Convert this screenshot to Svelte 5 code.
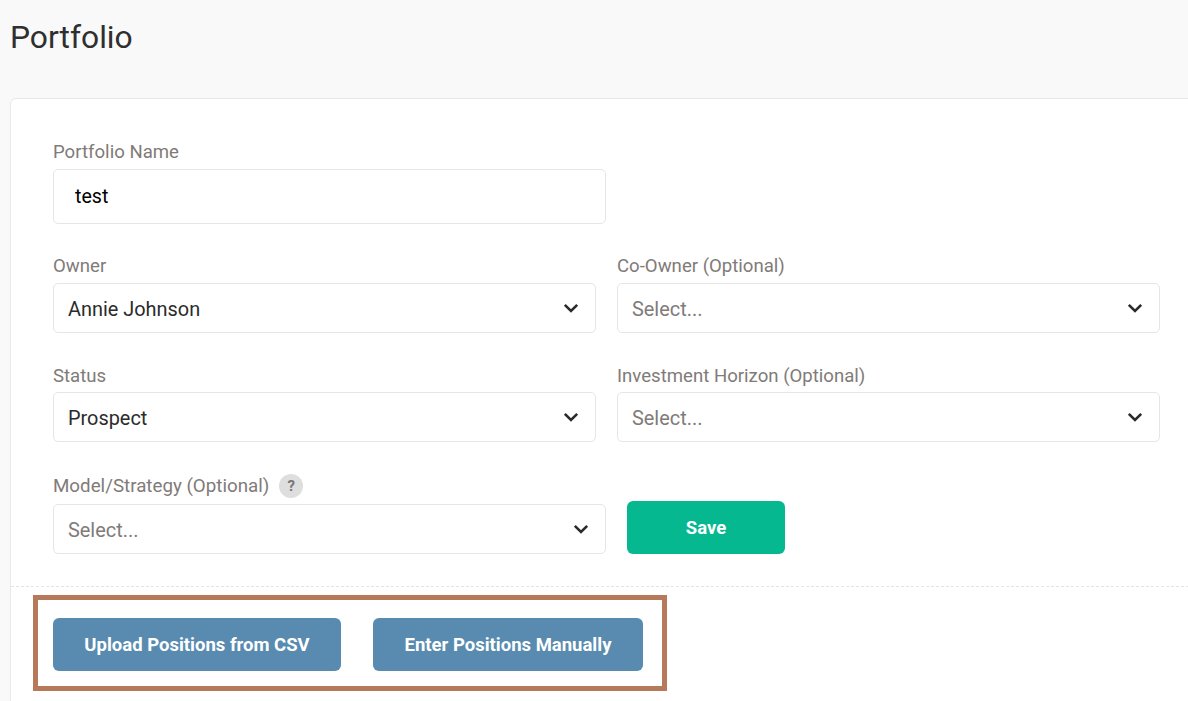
<script lang="ts">
	const rows = [
		[
			{ label: 'Owner', value: 'Annie Johnson' },
			{ label: 'Co-Owner (Optional)', value: '' }
		],
		[
			{ label: 'Status', value: 'Prospect' },
			{ label: 'Investment Horizon (Optional)', value: '' }
		]
	];
</script>

{#snippet select(value: string)}
	<div class="select">
		<span class:placeholder={!value}>{value || 'Select...'}</span>
		<svg class="chevron" width="16" height="10" viewBox="0 0 16 10" aria-hidden="true">
			<path d="M1.8 1.8 8 8l6.2-6.2" fill="none" stroke="#2b2b2b" stroke-width="2.6" />
		</svg>
	</div>
{/snippet}

<main class="page">
	<h1>Portfolio</h1>
	<section class="card">
		<div class="form">
			<label class="name-label" for="portfolio-name">Portfolio Name</label>
			<input id="portfolio-name" class="name-input" value="test" />

			{#each rows as row, i (i)}
				<div class="row" class:second={i === 1}>
					{#each row as field (field.label)}
						<div class="field">
							<div class="label">{field.label}</div>
							{@render select(field.value)}
						</div>
					{/each}
				</div>
			{/each}

			<div class="label model-label">
				Model/Strategy (Optional)
				<span class="help">?</span>
			</div>
			<div class="model-row">
				{@render select('')}
				<button class="save">Save</button>
			</div>
		</div>

		<div class="actions">
			<div class="highlight">
				<button class="blue upload">Upload Positions from CSV</button>
				<button class="blue manual">Enter Positions Manually</button>
			</div>
		</div>
	</section>
</main>

<style>
	:global(body) {
		margin: 0;
		background: #f9f9f9;
		font-family: Roboto, 'Liberation Sans', sans-serif;
		overflow: hidden;
	}
	.page {
		height: 701px;
		padding-left: 10px;
		overflow: hidden;
		box-sizing: border-box;
	}
	h1 {
		margin: 0;
		height: 98px;
		padding-top: 17px;
		box-sizing: border-box;
		font-size: 31.8px;
		line-height: 40px;
		font-weight: 400;
		color: #2f2f2f;
	}
	.card {
		width: 1200px;
		height: 640px;
		background: #fff;
		border: 1px solid #e8e8e8;
		border-radius: 6px;
		box-sizing: border-box;
	}
	.form {
		padding: 43px 0 32px 42px;
		border-bottom: 1px dashed #e4e4e4;
		height: 488px;
		box-sizing: border-box;
	}
	.label,
	.name-label {
		display: block;
		height: 20px;
		line-height: 20px;
		font-size: 18.6px;
		color: #7f7b78;
	}
	.name-label {
		margin-bottom: 7px;
	}
	.name-input {
		display: block;
		width: 553px;
		height: 55px;
		box-sizing: border-box;
		border: 1px solid #e6e6e6;
		border-radius: 5px;
		padding: 0 21px 1px;
		font: 400 19.6px Roboto, sans-serif;
		color: #000;
		outline: none;
	}
	.row {
		display: grid;
		grid-template-columns: 543px 543px;
		column-gap: 21px;
		margin-top: 32px;
	}
	.row.second {
		margin-top: 33px;
	}
	.field .label {
		margin-bottom: 7px;
	}
	.row.second .label {
		margin-bottom: 6px;
	}
	.select {
		display: flex;
		align-items: center;
		justify-content: space-between;
		height: 50px;
		box-sizing: border-box;
		border: 1px solid #e6e6e6;
		border-radius: 5px;
		padding: 0 16px 0 14px;
		font-size: 19.9px;
		color: #2b2b2b;
		background: #fff;
	}
	.select span {
		padding-top: 2px;
	}
	.placeholder {
		color: #7f7b78;
	}
	.model-label {
		display: flex;
		align-items: center;
		gap: 10px;
		margin-top: 34px;
		font-size: 18.75px;
	}
	.help {
		display: inline-flex;
		align-items: center;
		justify-content: center;
		width: 24px;
		height: 24px;
		border-radius: 50%;
		background: #dedede;
		font-size: 15px;
		font-weight: 700;
		color: #777;
	}
	.model-row {
		display: flex;
		align-items: flex-end;
		gap: 21px;
		margin-top: 5px;
	}
	.model-row .select {
		width: 553px;
	}
	button {
		border: 0;
		border-radius: 6px;
		color: #fff;
		font: 700 18.5px Roboto, sans-serif;
		height: 53px;
		padding: 0;
	}
	.save {
		width: 158px;
		background: #06b890;
	}
	.actions {
		padding: 8px 0 0 22px;
	}
	.highlight {
		display: flex;
		gap: 32px;
		width: 634px;
		height: 96px;
		box-sizing: border-box;
		border: 5px solid #b67a5a;
		padding: 18px 0 0 15px;
	}
	.blue {
		background: #588baf;
	}
	.upload {
		width: 288px;
	}
	.manual {
		width: 270px;
	}
</style>
